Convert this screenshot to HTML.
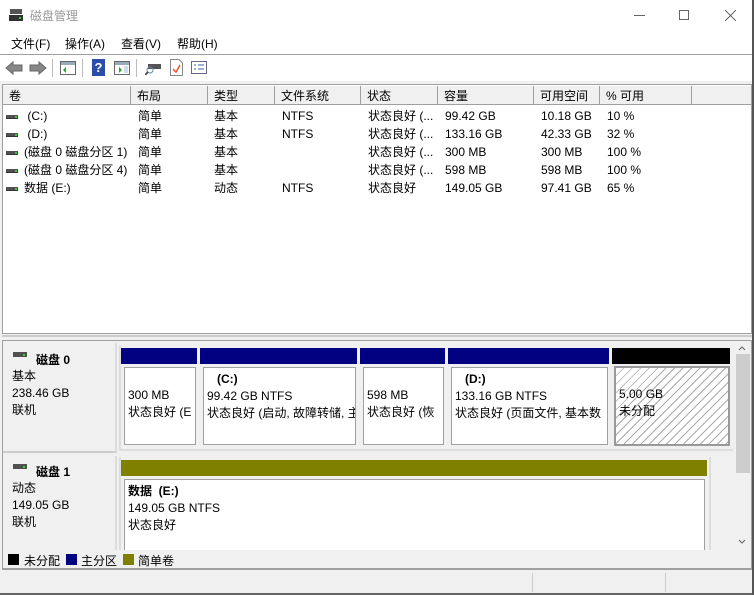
<!DOCTYPE html>
<html><head><meta charset="utf-8"><style>
*{margin:0;padding:0;box-sizing:border-box}
body{width:754px;height:595px;background:#f0f0f0;font-family:"Liberation Sans","Noto Sans CJK SC",sans-serif;font-size:12px;color:#000;position:relative;overflow:hidden}
.a{position:absolute;white-space:nowrap}
.hd{position:absolute;top:86px;height:19px;background:#f0f0f0;border-right:1px solid #a0a0a0;border-bottom:1px solid #a0a0a0;padding:3px 0 0 6px;line-height:14px}
.dk{display:inline-block;width:12px;height:4px;background:#505050;border-bottom:1px solid #333;vertical-align:middle;margin-right:6px;position:relative}
.dk:after{content:"";position:absolute;right:1px;top:1px;width:2px;height:2px;background:#3c3}
.box{position:absolute;background:#fff;border:1px solid #a0a0a0;padding:3px 0 0 3px;line-height:17px;overflow:hidden;white-space:nowrap}
.bar{position:absolute;height:16px}
</style></head><body>
<div class="a" style="left:0;top:0;width:754px;height:32px;background:#fff"></div>
<svg class="a" style="left:9px;top:8px" width="14" height="14"><rect x="1" y="1" width="12" height="5" fill="#555"/><rect x="0" y="7" width="14" height="6" fill="#333"/><rect x="10" y="9" width="2" height="2" fill="#3c3"/></svg>
<div class="a" style="left:30px;top:7px;color:#999;font-size:12px">磁盘管理</div>
<div class="a" style="left:634px;top:15px;width:11px;height:1px;background:#666"></div>
<div class="a" style="left:679px;top:10px;width:10px;height:10px;border:1px solid #666"></div>
<svg class="a" style="left:725px;top:10px" width="11" height="11"><path d="M0 0L11 11M11 0L0 11" stroke="#666" stroke-width="1"/></svg>
<div class="a" style="left:0;top:32px;width:754px;height:22px;background:#fff"></div>
<div class="a" style="left:11px;top:35px">文件(F)</div>
<div class="a" style="left:65px;top:35px">操作(A)</div>
<div class="a" style="left:121px;top:35px">查看(V)</div>
<div class="a" style="left:177px;top:35px">帮助(H)</div>
<div class="a" style="left:0;top:54px;width:754px;height:1px;background:#a0a0a0"></div>
<div class="a" style="left:0;top:55px;width:754px;height:26px;background:#fff"></div>
<svg class="a" style="left:5px;top:60px" width="42" height="16"><path d="M1 8L8 2V5H17V11H8V14Z" fill="#888" stroke="#666"/><path d="M41 8L34 2V5H25V11H34V14Z" fill="#888" stroke="#666"/></svg>
<div class="a" style="left:52px;top:59px;width:1px;height:18px;background:#bbb"></div>
<svg class="a" style="left:60px;top:61px" width="16" height="14"><rect x=".5" y=".5" width="15" height="13" fill="#fff" stroke="#666"/><rect x="1" y="1" width="14" height="3" fill="#9ab"/><path d="M6 6V12L3 9Z" fill="#2a2"/></svg>
<div class="a" style="left:82px;top:59px;width:1px;height:18px;background:#bbb"></div>
<div class="a" style="left:92px;top:59px;width:13px;height:17px;background:#2b4ea8;color:#fff;font-weight:bold;font-size:13px;text-align:center;line-height:17px">?</div>
<svg class="a" style="left:114px;top:61px" width="16" height="14"><rect x=".5" y=".5" width="15" height="13" fill="#fff" stroke="#666"/><rect x="1" y="1" width="14" height="3" fill="#9ab"/><path d="M5 6V12L8 9Z" fill="#2a2"/><rect x="10" y="5" width="4" height="7" fill="#cde"/></svg>
<div class="a" style="left:136px;top:59px;width:1px;height:18px;background:#bbb"></div>
<svg class="a" style="left:145px;top:61px" width="16" height="14"><rect x="3" y="3" width="13" height="5" fill="#555"/><circle cx="5" cy="9" r="3" fill="none" stroke="#68a"/><path d="M3 11L0 14" stroke="#555" stroke-width="2"/></svg>
<svg class="a" style="left:170px;top:59px" width="13" height="17"><path d="M.5 .5H9L12.5 4V16.5H.5Z" fill="#fff" stroke="#888"/><path d="M3 10L6 13L10 6" stroke="#e53" stroke-width="1.5" fill="none"/></svg>
<svg class="a" style="left:191px;top:61px" width="16" height="13"><rect x=".5" y=".5" width="15" height="12" fill="#fff" stroke="#668"/><path d="M3 4H5M3 8H5M7 4H13M7 8H13" stroke="#36a"/></svg>
<div class="a" style="left:2px;top:84px;width:750px;height:250px;background:#fff;border:1px solid #a0a0a0"></div>
<div class="hd" style="left:3px;width:128px">卷</div>
<div class="hd" style="left:131px;width:77px">布局</div>
<div class="hd" style="left:208px;width:67px">类型</div>
<div class="hd" style="left:275px;width:86px">文件系统</div>
<div class="hd" style="left:361px;width:77px">状态</div>
<div class="hd" style="left:438px;width:96px">容量</div>
<div class="hd" style="left:534px;width:66px">可用空间</div>
<div class="hd" style="left:600px;width:92px">% 可用</div>
<div class="hd" style="left:692px;width:59px;border-right:0"></div>
<div class="a" style="left:6px;top:107px;line-height:18px">
<div><span class="dk"></span> (C:)</div><div><span class="dk"></span> (D:)</div><div><span class="dk"></span>(磁盘 0 磁盘分区 1)</div><div><span class="dk"></span>(磁盘 0 磁盘分区 4)</div><div><span class="dk"></span>数据 (E:)</div></div>
<div class="a" style="left:138px;top:107px;line-height:18px">简单<br>简单<br>简单<br>简单<br>简单</div>
<div class="a" style="left:214px;top:107px;line-height:18px">基本<br>基本<br>基本<br>基本<br>动态</div>
<div class="a" style="left:282px;top:107px;line-height:18px">NTFS<br>NTFS<br><br><br>NTFS</div>
<div class="a" style="left:368px;top:107px;line-height:18px">状态良好 (...<br>状态良好 (...<br>状态良好 (...<br>状态良好 (...<br>状态良好</div>
<div class="a" style="left:445px;top:107px;line-height:18px">99.42 GB<br>133.16 GB<br>300 MB<br>598 MB<br>149.05 GB</div>
<div class="a" style="left:541px;top:107px;line-height:18px">10.18 GB<br>42.33 GB<br>300 MB<br>598 MB<br>97.41 GB</div>
<div class="a" style="left:607px;top:107px;line-height:18px">10 %<br>32 %<br>100 %<br>100 %<br>65 %</div>
<div class="a" style="left:2px;top:335px;width:750px;height:2px;background:#ccc"></div>
<div class="a" style="left:2px;top:340px;width:750px;height:230px;border:1px solid #a0a0a0;background:#f0f0f0"></div>
<div class="a" style="left:3px;top:343px;width:114px;height:110px;border-right:2px solid #ddd;border-bottom:2px solid #ccc"></div>
<svg class="a" style="left:13px;top:352px" width="14" height="6"><rect width="14" height="5" fill="#505050"/><rect x="10" y="2" width="2" height="2" fill="#3c3"/></svg>
<div class="a" style="left:36px;top:351px;font-weight:bold">磁盘 0</div>
<div class="a" style="left:12px;top:368px;line-height:17px">基本<br>238.46 GB<br>联机</div>
<div class="a" style="left:119px;top:345px;width:614px;height:106px;border-left:2px solid #ddd;border-bottom:2px solid #ddd"></div>
<div class="bar" style="left:121px;top:348px;width:76px;background:#000080"></div>
<div class="bar" style="left:200px;top:348px;width:157px;background:#000080"></div>
<div class="bar" style="left:360px;top:348px;width:85px;background:#000080"></div>
<div class="bar" style="left:448px;top:348px;width:161px;background:#000080"></div>
<div class="bar" style="left:612px;top:348px;width:118px;background:#000"></div>
<div class="box" style="left:124px;top:367px;width:72px;height:78px;padding-top:19px">300 MB<br>状态良好 (E</div>
<div class="box" style="left:203px;top:367px;width:153px;height:78px">&nbsp;&nbsp;&nbsp;<b>(C:)</b><br>99.42 GB NTFS<br>状态良好 (启动, 故障转储, 主</div>
<div class="box" style="left:363px;top:367px;width:81px;height:78px;padding-top:19px">598 MB<br>状态良好 (恢</div>
<div class="box" style="left:451px;top:367px;width:157px;height:78px">&nbsp;&nbsp;&nbsp;<b>(D:)</b><br>133.16 GB NTFS<br>状态良好 (页面文件, 基本数</div>
<div class="box" style="left:614px;top:366px;width:116px;height:80px;border:2px solid #999;padding:18px 0 0 3px;background:repeating-linear-gradient(135deg,#fff 0 5px,#aaa 5px 6px)">5.00 GB<br>未分配</div>
<div class="a" style="left:3px;top:456px;width:114px;height:94px;border-right:2px solid #ddd"></div>
<svg class="a" style="left:13px;top:464px" width="14" height="6"><rect width="14" height="5" fill="#505050"/><rect x="10" y="2" width="2" height="2" fill="#3c3"/></svg>
<div class="a" style="left:36px;top:463px;font-weight:bold">磁盘 1</div>
<div class="a" style="left:12px;top:480px;line-height:17px">动态<br>149.05 GB<br>联机</div>
<div class="a" style="left:119px;top:457px;width:592px;height:93px;border-left:2px solid #ddd;border-right:2px solid #ddd"></div>
<div class="bar" style="left:121px;top:460px;width:586px;background:#808000"></div>
<div class="box" style="left:124px;top:479px;width:581px;height:71px;border-bottom:0"><b>数据&nbsp; (E:)</b><br>149.05 GB NTFS<br>状态良好</div>
<div class="a" style="left:734px;top:343px;width:17px;height:207px;background:#f0f0f0"></div>
<div class="a" style="left:736px;top:354px;width:14px;height:119px;background:#cdcdcd"></div>
<svg class="a" style="left:738px;top:345px" width="8" height="6"><path d="M1 5L4 2L7 5" stroke="#606060" fill="none"/></svg>
<svg class="a" style="left:738px;top:539px" width="8" height="6"><path d="M1 1L4 4L7 1" stroke="#606060" fill="none"/></svg>
<div class="a" style="left:3px;top:550px;width:748px;height:19px;background:#f0f0f0;border-bottom:1px solid #a0a0a0"></div>
<div class="a" style="left:8px;top:554px;width:11px;height:11px;background:#000"></div>
<div class="a" style="left:24px;top:552px">未分配</div>
<div class="a" style="left:66px;top:554px;width:11px;height:11px;background:#000080"></div>
<div class="a" style="left:81px;top:552px">主分区</div>
<div class="a" style="left:123px;top:554px;width:11px;height:11px;background:#808000"></div>
<div class="a" style="left:138px;top:552px">简单卷</div>
<div class="a" style="left:532px;top:573px;width:1px;height:19px;background:#ccc"></div>
<div class="a" style="left:665px;top:573px;width:1px;height:19px;background:#ccc"></div>
<div class="a" style="left:0;top:593px;width:754px;height:2px;background:#666"></div>
<div class="a" style="left:752px;top:0;width:2px;height:595px;background:#555"></div>
</body></html>
